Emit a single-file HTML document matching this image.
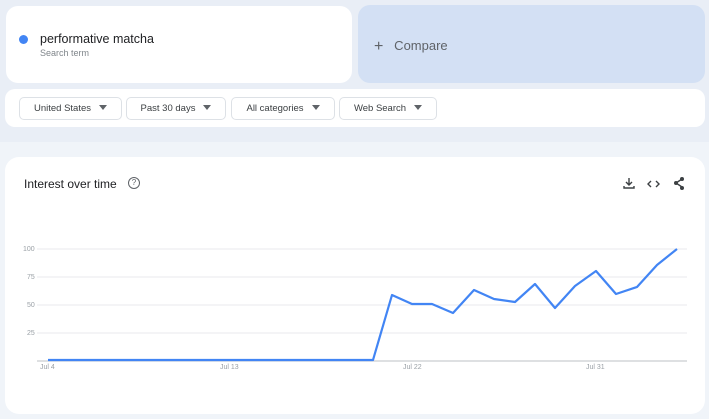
<!DOCTYPE html>
<html><head><style>
body{margin:0;width:709px;height:419px;overflow:hidden;background:#f0f4f9;font-family:"Liberation Sans",sans-serif;position:relative}
.top{position:absolute;left:0;top:0;width:709px;height:142px;background:#e9eef6}
.card{position:absolute;background:#fff;border-radius:12px}
.pill{position:absolute;top:97px;height:21px;border:1px solid #dde1e6;border-radius:5px;font-size:9.5px;color:#3c4043;line-height:21px;text-align:center;background:#fff}
.pill:after{content:"";display:inline-block;margin-left:8px;border:4px solid transparent;border-top:5px solid #5f6368;vertical-align:-3px}
</style></head><body>
<div class="top"></div>
<div class="card" style="left:6px;top:6px;width:346px;height:77px">
<div style="position:absolute;left:13px;top:29px;width:9px;height:9px;border-radius:50%;background:#4285f4"></div>
<div style="position:absolute;left:34px;top:26px;font-size:12.5px;color:#202124">performative matcha</div>
<div style="position:absolute;left:34px;top:42px;font-size:9px;color:#80868b">Search term</div>
</div>
<div style="position:absolute;left:358px;top:5px;width:347px;height:78px;border-radius:12px;background:#d3e0f4">
<div style="position:absolute;left:16px;top:33px;font-size:13px;color:#5f6368"><span style="font-size:16px;vertical-align:-1px">+</span>&nbsp;&nbsp;&nbsp;Compare</div>
</div>
<div class="card" style="left:5px;top:89px;width:700px;height:38px;border-radius:10px"></div>
<div class="pill" style="left:19px;width:101px">United States</div>
<div class="pill" style="left:126px;width:98px">Past 30 days</div>
<div class="pill" style="left:231px;width:102px">All categories</div>
<div class="pill" style="left:339px;width:96px">Web Search</div>
<div class="card" style="left:5px;top:157px;width:700px;height:257px;border-radius:14px"></div>
<div style="position:absolute;left:24px;top:177px;font-size:12px;color:#202124">Interest over time</div>
<div style="position:absolute;left:128px;top:177px;width:10px;height:10px;border:1px solid #5f6368;border-radius:50%;font-size:8px;line-height:10px;text-align:center;color:#5f6368">?</div>
<svg style="position:absolute;left:0;top:0" width="709" height="419">
<g stroke="#3c4043" stroke-width="1.4" fill="none">
<path d="M629 178v7M626 182l3 3 3-3M624 186v2h10v-2"/>
<path d="M651 181l-3 3 3 3M656 181l3 3-3 3"/>
<path d="M682 179l-6 4 6 4"/>
</g>
<g fill="#3c4043"><circle cx="682" cy="179" r="2"/><circle cx="676" cy="183" r="2"/><circle cx="682" cy="188" r="2"/></g>
<g stroke="#e8eaed" stroke-width="1"><line x1="37" y1="249" x2="687" y2="249"/><line x1="37" y1="277" x2="687" y2="277"/><line x1="37" y1="305" x2="687" y2="305"/><line x1="37" y1="333" x2="687" y2="333"/></g>
<line x1="37" y1="361" x2="687" y2="361" stroke="#bdc1c6"/>
<g font-size="7" fill="#9aa0a6" font-family="Liberation Sans"><text x="23" y="251">100</text><text x="27" y="279">75</text><text x="27" y="307">50</text><text x="27" y="335">25</text>
<text x="40" y="369">Jul 4</text><text x="220" y="369">Jul 13</text><text x="403" y="369">Jul 22</text><text x="586" y="369">Jul 31</text></g>
<polyline fill="none" stroke="#4285f4" stroke-width="2.2" stroke-linejoin="round" points="48,360 373,360 392,295 412,304 432,304 453,313 474,290 494,299 515,302 535,284 555,308 575,286 596,271 616,294 637,287 657,265 677,249"/>
</svg>
</body></html>
